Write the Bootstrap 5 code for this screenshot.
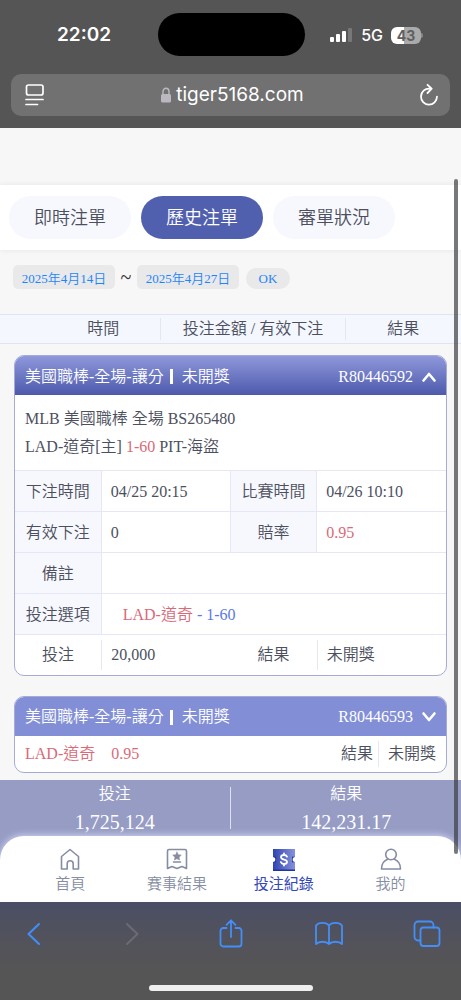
<!DOCTYPE html>
<html lang="zh-Hant">
<head>
<meta charset="utf-8">
<meta name="viewport" content="width=device-width, initial-scale=1">
<title>投注紀錄</title>
<link href="https://cdn.jsdelivr.net/npm/bootstrap@5.3.0/dist/css/bootstrap.min.css" rel="stylesheet">
<script src="https://cdn.jsdelivr.net/npm/bootstrap@5.3.0/dist/js/bootstrap.bundle.min.js" defer></script>
<style>
  :root { --ink: #4c505e; --rose: #d96a78; --line: #e6e6f6; --brand: #5160ae; --tint: #f7f8fd; }
  body { font-family: "Liberation Serif", "Noto Sans CJK TC", serif; font-size: 16px; font-weight: 350; line-height: 24px; color: var(--ink); background: #f7f7f7; }
  svg { display: block; fill: none; stroke: currentColor; stroke-linecap: round; stroke-linejoin: round; }
  button { font: inherit; color: inherit; }

  .browser-top { background: #555; color: #fff; font-family: Inter, sans-serif; font-weight: 400; padding-bottom: 12px; }
  .status { height: 74px; padding: 0 38px 4px 57px; }
  .clock { font-size: 19px; font-weight: 600; }
  .island { width: 147px; height: 43px; background: #000; left: 50%; top: 13px; margin-left: -73px; }
  .net { font-size: 16px; font-weight: 500; }
  .battery { width: 30px; height: 17px; border-radius: 6px; font-size: 14px; line-height: 17px; font-weight: 700; color: #606060; background: linear-gradient(90deg, #fff 43%, #aaa 43%); }
  .battery-tip { width: 2px; height: 5px; border-radius: 0 2px 2px 0; background: #888; }
  .url { height: 42px; margin: 0 11px; padding: 0 11px 0 14px; border-radius: 10px; background: #717171; font-size: 19px; }
  .lock { color: #bbb8c0; }

  .tabs { margin-top: 57px; padding: 11px 9px; background: #fff; box-shadow: 0 0 6px rgba(0,0,0,.08); gap: 10px; }
  .tab { width: 122px; height: 43px; border: 0; border-radius: 22px; background: var(--tint); font-size: 18px; }
  .tab.on { background: var(--brand); color: #fff; }

  .dates { padding: 0 13px; margin-top: 15px; font-size: 13px; line-height: 20px; }
  .date { width: 102px; height: 24px; border: 0; border-radius: 5px; background: #e9e9e9; color: #1d86fb; text-align: center; padding: 0; font-weight: 350; }
  .ok { width: 44px; height: 21px; border: 0; border-radius: 11px; background: #e9e9e9; color: #1d86fb; padding: 0; margin: 3px 0 0 7px; }
  .tilde { width: 22px; text-align: center; font-size: 20px; color: #333; }

  .heads { margin: 25px 0 11px; background: #f4f7fe; border: solid #dfe3f2; border-width: 1px 0; padding: 3px 0; line-height: 22px; }
  .heads > div { border-color: #e3e7f4 !important; }
  .h-time { width: 35%; padding-left: 10%; }
  .h-sum { width: 40%; }
  .h-res { width: 25%; }

  .bet { margin: 0 14px 20px; border: 1px solid #a5abd5; border-radius: 10px; background: #fff; overflow: hidden; }
  .bet:last-child { margin-bottom: 7px; }
  .bet-head { width: 100%; height: 39px; border: 0; padding: 2px 9px 0 10px; background: #828fd6; color: #fff; text-align: left; }
  .bet-head.open { background: linear-gradient(#8f98db, #4d5aac); }
  .bar { width: 3px; height: 15px; background: #fff; margin: 0 9px 0 6px; }
  .match { padding: 10px 10px 9px; line-height: 28px; }
  .detail { table-layout: fixed; width: 100%; }
  .c-label { width: 20%; }
  .c-value { width: 30%; }
  .detail th, .detail td { height: 41px; padding: 1px 9px 0; border: solid var(--line); border-width: 1px 0 0 1px; font-weight: inherit; white-space: nowrap; vertical-align: middle; }
  .detail th { background: var(--tint); text-align: center; padding: 1px 0 0; }
  .detail th:first-child { border-left: 0; }
  .detail .plain > * { background: none; border-left: 0; height: 40px; }
  .detail .plain td { padding-left: 0; }
  .detail .plain td > div { border-left: 1px solid var(--line); padding: 4px 0 4px 9px; line-height: 22px; }
  .rose { color: var(--rose); }
  .azure { color: #5a78e6; }
  .brief { padding: 5px 10px; line-height: 26px; }
  .brief .res { border-left: 1px solid var(--line); padding-left: 9px; margin-left: 5px; }

  .totals { background: #969cc4; color: #fff; padding: 2px 0 24px; margin-bottom: -24px; }
  .totals .rule { width: 2px; background: #dfe1ef; margin: 5px 0 7px; }
  .totals .amount { font-size: 20px; line-height: 26px; padding-top: 3px; height: 30px; }

  .dock { position: relative; background: #fff; border-radius: 24px 24px 0 0; padding: 11px 17px 7px; box-shadow: 0 -1px 7px rgba(225,228,255,.8); font-size: 15px; line-height: 22px; }
  .dock a { color: #858da2; text-decoration: none; gap: 2px; }
  .dock a.on { color: #3448b8; font-weight: 400; }

  .browser-bottom { position: relative; background: linear-gradient(#4b4f65, #53535a 45%, #555 70%); color: #438ff7; padding: 16px 20px 9px; }
  .browser-bottom button { border: 0; background: none; padding: 0; }
  .browser-bottom .off { color: #6b6c72; }
  .home { width: 164px; height: 6px; border-radius: 3px; background: #f0eff0; margin: 35px auto 0; }
  .scroller { right: 3px; top: 179px; width: 4px; height: 675px; border-radius: 2px; background: rgba(60,62,64,.7); z-index: 5; }
</style>
</head>
<body>
<div class="position-relative d-flex flex-column min-vh-100">
  <div class="scroller position-absolute"></div>

  <header class="browser-top">
    <div class="status position-relative d-flex align-items-center justify-content-between">
      <span class="clock">22:02</span>
      <div class="island position-absolute rounded-pill"></div>
      <div class="d-flex align-items-center">
        <svg width="24" height="16" viewBox="0 0 24 16"><g fill="#fff" stroke="none"><rect x="1" y="10" width="4" height="5" rx="1"/><rect x="7" y="7" width="4" height="8" rx="1"/><rect x="13" y="4" width="4" height="11" rx="1"/></g><rect x="19" y="1" width="4" height="14" rx="1" fill="#777" stroke="none"/></svg>
        <span class="net ms-2">5G</span>
        <span class="battery ms-2 text-center">43</span><span class="battery-tip"></span>
      </div>
    </div>
    <div class="url d-flex align-items-center justify-content-between">
      <svg width="20" height="22" viewBox="0 0 20 22" stroke-width="1.7"><rect x="1.5" y="1" width="16.5" height="10" rx="2"/><path d="M1 15.5h17M1 20.5h11.500"/></svg>
      <div class="d-flex align-items-center gap-1">
        <svg class="lock" width="12" height="16" viewBox="0 0 12 16"><rect x="1" y="7" width="10" height="8.500" rx="1.500" fill="currentColor" stroke="none"/><path d="M3 8V4.500a3 3.200 0 0 1 6 0V8" stroke-width="1.400"/></svg>
        <span>tiger5168.com</span>
      </div>
      <svg width="20" height="24" viewBox="0 0 20 24" stroke-width="1.800"><path d="M10.500 5.600a8 8 0 1 0 7.500 8M8.500 1.800l4.200 3.900-4.200 4.300"/></svg>
    </div>
  </header>

  <main class="flex-grow-1">
    <nav class="tabs d-flex">
      <button class="tab" type="button">即時注單</button>
      <button class="tab on" type="button">歷史注單</button>
      <button class="tab" type="button">審單狀況</button>
    </nav>

    <form class="dates d-flex align-items-center">
      <input class="date" type="text" aria-label="開始日期" value="2025年4月14日" readonly>
      <span class="tilde">~</span>
      <input class="date" type="text" aria-label="結束日期" value="2025年4月27日" readonly>
      <button class="ok" type="button">OK</button>
    </form>

    <div class="heads d-flex text-center">
      <div class="h-time border-end">時間</div>
      <div class="h-sum border-end">投注金額 / 有效下注</div>
      <div class="h-res">結果</div>
    </div>

    <section class="bet">
      <button class="bet-head open d-flex align-items-center" type="button">
        <span>美國職棒-全場-讓分</span><span class="bar"></span><span>未開獎</span>
        <span class="ms-auto me-2">R80446592</span>
        <svg width="16" height="12" viewBox="0 0 16 12" stroke-width="2.600"><path d="M2.500 9.500 8 3l5.500 6.500"/></svg>
      </button>
      <div class="match">MLB 美國職棒 全場 BS265480<br>LAD-道奇[主] <span class="rose">1-60</span> PIT-海盜</div>
      <table class="detail">
        <colgroup><col class="c-label"><col class="c-value"><col class="c-label"><col class="c-value"></colgroup>
        <tr><th>下注時間</th><td>04/25 20:15</td><th>比賽時間</th><td>04/26 10:10</td></tr>
        <tr><th>有效下注</th><td>0</td><th>賠率</th><td class="rose">0.95</td></tr>
        <tr><th>備註</th><td colspan="3"></td></tr>
        <tr><th>投注選項</th><td colspan="3"><span class="ms-2 ps-1 rose">LAD-道奇</span> <span class="azure">- 1-60</span></td></tr>
        <tr class="plain"><th>投注</th><td><div>20,000</div></td><th>結果</th><td><div>未開獎</div></td></tr>
      </table>
    </section>

    <section class="bet">
      <button class="bet-head d-flex align-items-center" type="button">
        <span>美國職棒-全場-讓分</span><span class="bar"></span><span>未開獎</span>
        <span class="ms-auto me-2">R80446593</span>
        <svg width="16" height="12" viewBox="0 0 16 12" stroke-width="2.600"><path d="M2.500 2.500 8 9l5.500-6.500"/></svg>
      </button>
      <div class="brief d-flex">
        <span class="rose">LAD-道奇</span><span class="rose ms-3">0.95</span>
        <span class="ms-auto">結果</span><span class="res">未開獎</span>
      </div>
    </section>
  </main>

  <section class="totals d-flex text-center">
    <div class="flex-fill w-50">投注<div class="amount">1,725,124</div></div>
    <div class="rule"></div>
    <div class="flex-fill w-50">結果<div class="amount">142,231.17</div></div>
  </section>

  <nav class="dock d-flex">
    <a class="col d-flex flex-column align-items-center" href="#">
      <svg width="24" height="24" viewBox="0 0 24 24" stroke-width="1.600"><path d="M3.500 9.500 12 2.500l8.500 7V22h-5.300v-5.200a3 3 0 0 0-6 0V22H3.500z"/></svg>首頁</a>
    <a class="col d-flex flex-column align-items-center" href="#">
      <svg width="24" height="24" viewBox="0 0 24 24" stroke-width="1.600"><path d="M4 2.500h16a1.500 1.500 0 0 1 1.500 1.500v17.500l-4.500-2-5 2-5-2-4.500 2V4A1.500 1.500 0 0 1 4 2.500z"/><path d="M8.500 15h7"/><path d="m12 5 1.300 2.700 3 .4-2.200 2.100.5 2.900-2.600-1.400-2.600 1.400.5-2.900-2.200-2.100 3-.4z" fill="currentColor" stroke-width=".5"/></svg>賽事結果</a>
    <a class="col d-flex flex-column align-items-center on" href="#" aria-current="page">
      <svg width="24" height="24" viewBox="0 0 24 24"><defs><linearGradient id="tk" x1="0" y1="0" x2="1" y2="0"><stop stop-color="#2f44b0"/><stop offset="1" stop-color="#8792db"/></linearGradient></defs><path stroke="none" fill="url(#tk)" d="M1 2h22v8a2.500 2.500 0 0 0 0 5v9H1v-9a2.500 2.500 0 0 0 0-5z"/><path fill="#2034a0" stroke="none" d="M1 10a2.500 2.500 0 0 1 2.500 2.500A2.500 2.500 0 0 1 1 15l3 .6V9.400zM23 10a2.500 2.500 0 0 0-2.500 2.500A2.500 2.500 0 0 0 23 15l-3 .6V9.400zM1 22.500h22V24H1z"/><path stroke="#fff" stroke-width="1.800" d="M15 9.700c-.5-1.200-1.600-1.700-3-1.700-1.800 0-3 .8-3 2.200 0 3.200 6 1.500 6 4.500 0 1.500-1.300 2.300-3 2.300-1.600 0-2.700-.7-3.200-2M12 6.500V8M12 17v1.500"/></svg>投注紀錄</a>
    <a class="col d-flex flex-column align-items-center" href="#">
      <svg width="24" height="24" viewBox="0 0 24 24" stroke-width="1.600"><circle cx="12" cy="7.500" r="5.300"/><path d="M8.500 12.200C4.500 13.800 2.500 17 2.500 22h19c0-5-2-8.200-6-9.800"/></svg>我的</a>
  </nav>

  <footer class="browser-bottom">
    <div class="d-flex justify-content-between">
      <button type="button" aria-label="上一頁"><svg width="28" height="32" viewBox="0 0 28 32" stroke-width="2"><path d="M19 6 8.500 16 19 26"/></svg></button>
      <button type="button" class="off" aria-label="下一頁" disabled><svg width="28" height="32" viewBox="0 0 28 32" stroke-width="2"><path d="m9 6 10.500 10L9 26"/></svg></button>
      <button type="button" aria-label="分享"><svg width="28" height="32" viewBox="0 0 28 32" stroke-width="1.800"><path d="M9.500 10H6.200a2.700 2.700 0 0 0-2.700 2.700v13.100a2.700 2.700 0 0 0 2.700 2.700h15.600a2.700 2.700 0 0 0 2.700-2.700V12.700a2.700 2.700 0 0 0-2.700-2.700h-3.300M14 19V2.500M9.500 6.800 14 2.300l4.500 4.500"/></svg></button>
      <button type="button" aria-label="書籤"><svg width="28" height="32" viewBox="0 0 28 32" stroke-width="1.800"><path d="M14 7.500C11.500 4 3.500 4 1 7.500V26c3-3 10-3 13 0 3-3 10-3 13 0V7.500C24.500 4 16.500 4 14 7.500zM14 7.500V26"/></svg></button>
      <button type="button" aria-label="分頁"><svg width="28" height="32" viewBox="0 0 28 32" stroke-width="1.800"><rect x="7.500" y="9.500" width="19" height="18.500" rx="3"/><path d="M7.500 22.500H5A3.500 3.500 0 0 1 1.500 19V7A3.500 3.500 0 0 1 5 3.500h12A3.500 3.500 0 0 1 20.500 7v2.500"/></svg></button>
    </div>
    <div class="home"></div>
  </footer>
</div>
</body>
</html>
